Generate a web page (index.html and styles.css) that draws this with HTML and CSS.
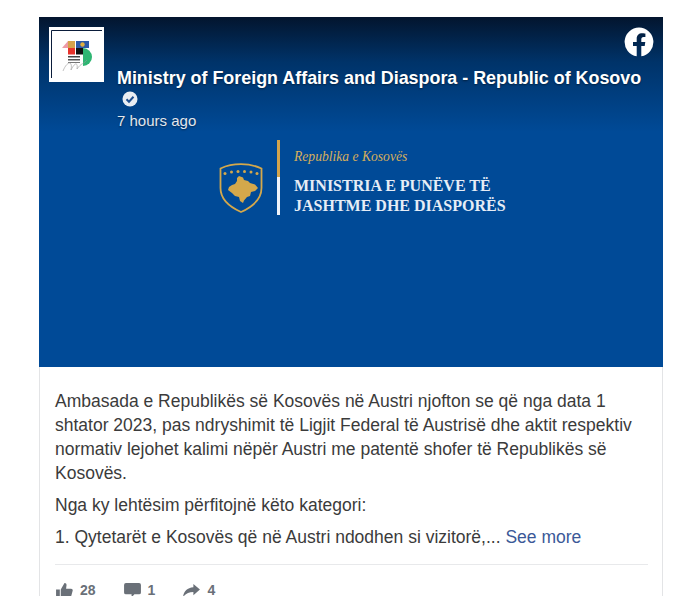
FILE: index.html
```html
<!DOCTYPE html>
<html lang="sq">
<head>
<meta charset="utf-8">
<title>Ministry of Foreign Affairs and Diaspora</title>
<link rel="stylesheet" href="styles.css">
</head>
<body>
<article class="card">
  <section class="media">
    <div class="brand">
      <svg class="coat" viewBox="0 0 44 50" aria-hidden="true">
        <path d="M1.500 5.500C9 2 15 1.200 22 1.200S35 2 42.500 5.500V25C42.500 37 32 44.500 22 49C12 44.500 1.500 37 1.500 25Z" fill="none" stroke="#d4a84b" stroke-width="1.800"/>
        <g fill="#d4a84b">
          <circle cx="6" cy="10.500" r="1.500"/><circle cx="12.500" cy="9" r="1.500"/><circle cx="19" cy="8.500" r="1.500"/><circle cx="25.500" cy="8.500" r="1.500"/><circle cx="32" cy="9" r="1.500"/><circle cx="38" cy="10.500" r="1.500"/>
          <path d="M20 13L24 14.500L25 17L29 18L31 20L36 21.500L39 25L36 28L32 29L31 33L28 34L25 37.500L24 40L21 38L20 34L16 33L13 30L9 27L10 24L13 22L16 21L18 18L18 15Z"/>
        </g>
      </svg>
      <div class="rule"></div>
      <div class="brand-text">
        <p class="brand-sub">Republika e Kosovës</p>
        <p class="brand-title">MINISTRIA E PUNËVE TË<br>JASHTME DHE DIASPORËS</p>
      </div>
    </div>
    <header class="head">
      <div class="avatar">
        <svg viewBox="0 0 55 55" aria-hidden="true">
          <path d="M2.500 51V3.500H53" fill="none" stroke="#0a1c3a" stroke-width="1"/>
          <path d="M13 21L19 14V21Z" fill="#ee9aa6"/>
          <rect x="19" y="14" width="7" height="7" fill="#d5a24c"/>
          <rect x="27" y="14" width="13" height="7" fill="#2d5aa8"/>
          <circle cx="33.500" cy="17.500" r="2.200" fill="#e0b040"/>
          <rect x="19" y="21" width="7" height="6.500" fill="#e7332b"/>
          <rect x="27" y="21" width="7" height="6.500" fill="#111"/>
          <path d="M34 21A9 9 0 0 1 34 39Z" fill="#2fb673"/>
          <rect x="19" y="29" width="12" height="1.500" fill="#444"/>
          <rect x="19" y="32" width="12" height="1.500" fill="#555"/>
          <rect x="19" y="35" width="12" height="1" fill="#777"/>
          <path d="M14 44C18 34 24 33 22 43C26 35 29 35 28 42C32 36 35 37 38 33" fill="none" stroke="#999" stroke-width=".6"/>
        </svg>
      </div>
      <div class="meta">
        <h1 class="name">Ministry of Foreign Affairs and Diaspora - Republic of Kosovo</h1>
        <svg class="badge" viewBox="0 0 16 16" aria-hidden="true">
          <circle cx="8" cy="8" r="7.500" fill="#e9edf2"/>
          <path d="M4.500 8.200L7 10.700L11.500 5.800" fill="none" stroke="#1f4f8f" stroke-width="2"/>
        </svg>
        <div class="time">7 hours ago</div>
      </div>
    </header>
    <svg class="fb" viewBox="0 0 30 30" aria-hidden="true">
      <path fill="#fff" d="M15 .5a14.500 14.500 0 0 0-2.300 28.800V19.100H9v-4.100h3.700v-3.200c0-3.600 2.200-5.600 5.500-5.600 1.600 0 3.200.3 3.200.3v3.500h-1.800c-1.800 0-2.300 1.100-2.300 2.200V15h4l-.6 4.100h-3.400v10.200A14.500 14.500 0 0 0 15 .5Z"/>
    </svg>
  </section>
  <section class="body">
    <p class="para">Ambasada e Republikës së Kosovës në Austri njofton se që nga data 1 shtator 2023, pas ndryshimit të Ligjit Federal të Austrisë dhe aktit respektiv normativ lejohet kalimi nëpër Austri me patentë shofer të Republikës së Kosovës.</p>
    <p class="para">Nga ky lehtësim përfitojnë këto kategori:</p>
    <p class="para">1. Qytetarët e Kosovës që në Austri ndodhen si vizitorë,... <a class="more" href="#">See more</a></p>
    <footer class="actions">
      <span class="action">
        <svg class="icon" viewBox="0 0 18 16" aria-hidden="true"><path d="M0 7h4v9H0ZM5 7L9 0c2 0 2.500 1.500 2 3.500L10.700 6H16c1.500 0 2 1.200 1.700 2.300L16 14.500c-.3 1-1 1.500-2 1.500H5Z"/></svg>
        28
      </span>
      <span class="action">
        <svg class="icon" viewBox="0 0 18 16" aria-hidden="true"><path d="M2 0h14a2 2 0 0 1 2 2v8a2 2 0 0 1-2 2h-5l-3 3.500V12H2a2 2 0 0 1-2-2V2a2 2 0 0 1 2-2Z"/></svg>
        1
      </span>
      <span class="action">
        <svg class="icon" viewBox="0 0 18 16" aria-hidden="true"><path d="M11 1l7 6-7 6V9.500C6 9.500 3 11 0 15c.5-5.500 4-10 11-10.500Z"/></svg>
        4
      </span>
    </footer>
  </section>
</article>
</body>
</html>
```
FILE: styles.css
```css
html, body {
  margin: 0;
  height: 100%;
  overflow: hidden;
  background: #fff;
}

.card {
  width: 622px;
  margin: 17px 0 0 39px;
  border: 1px solid #e3e4e6;
  border-top: 0;
  font-family: "Liberation Sans", Arial, sans-serif;
  color: #333;
}

.media {
  position: relative;
  height: 350px;
  box-sizing: border-box;
  padding: 123px 0 0 180px;
  margin: 0 -1px;
  background: linear-gradient(to bottom, #03152e 0, #003369 45px, #004a97 115px, #004a97 100%);
}

.brand {
  display: flex;
  align-items: flex-start;
}

.coat {
  width: 44px;
  height: 50px;
  margin: 23px 14px 0 0;
}

.rule {
  width: 3px;
  height: 75px;
  background: linear-gradient(to bottom, #d2a44d 0, #d2a44d 50%, #eef3fa 50%, #eef3fa 100%);
}

.brand-text {
  margin-left: 14px;
  font-family: "Liberation Serif", "Times New Roman", serif;
}

.brand-sub {
  margin: 9px 0 0;
  font-size: 13.600px;
  line-height: 16px;
  font-style: italic;
  color: #d6ae5c;
}

.brand-title {
  margin: 11px 0 0;
  font-size: 16px;
  line-height: 20px;
  font-weight: 700;
  color: #e6edf6;
}

.head {
  position: absolute;
  top: 10px;
  left: 10px;
  display: flex;
  gap: 13px;
}

.avatar {
  width: 55px;
  height: 55px;
  background: #fff;
  flex: none;
}

.avatar svg {
  display: block;
  width: 55px;
  height: 55px;
}

.meta {
  width: 535px;
  padding-top: 40px;
  color: #fff;
  text-shadow: 0 1px 2px rgba(0, 0, 0, .45);
}

.name {
  margin: 0;
  font-size: 17.900px;
  line-height: 22px;
  font-weight: 700;
}

.badge {
  display: block;
  width: 16px;
  height: 16px;
  margin: 2px 0 0 5px;
}

.time {
  margin-top: 5px;
  font-size: 15px;
  line-height: 18px;
  color: #e3e7ed;
}

.fb {
  position: absolute;
  top: 10px;
  right: 9px;
  width: 30px;
  height: 30px;
}

.body {
  padding: 22px 14px 0 15px;
}

.para {
  margin: 0 0 8px;
  font-size: 17.500px;
  line-height: 24px;
  color: #3b3b3b;
}

.more {
  color: #3b5998;
  text-decoration: none;
}

.actions {
  display: flex;
  gap: 28px;
  margin-top: 15px;
  padding: 15px 0 0 1px;
  border-top: 1px solid #e8e9eb;
}

.action {
  display: inline-flex;
  align-items: center;
  gap: 7px;
  font-size: 14px;
  line-height: 20px;
  font-weight: 700;
  color: #6a7078;
}

.icon {
  width: 17px;
  height: 15px;
  fill: #6a7078;
}
```
